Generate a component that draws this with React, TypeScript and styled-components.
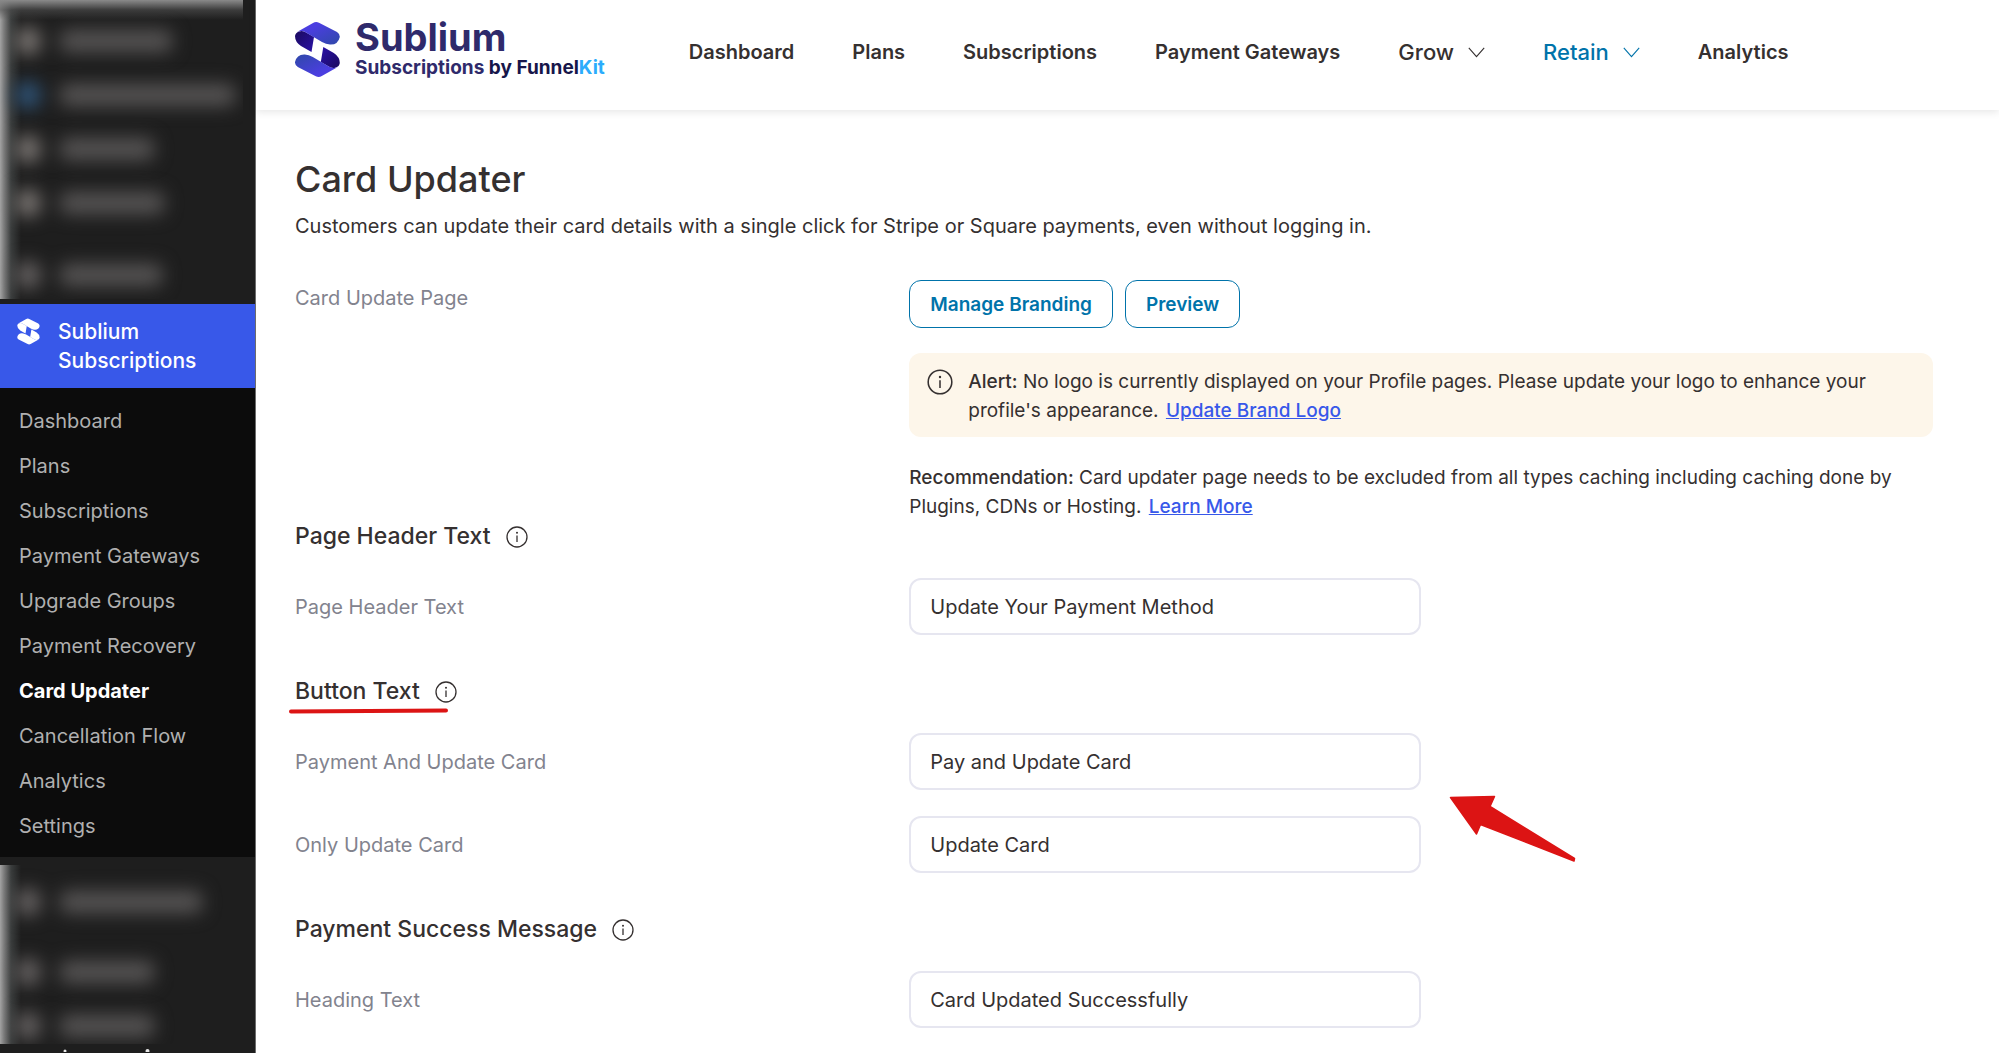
import React, { useId } from "react";
import styled, { createGlobalStyle } from "styled-components";

const GlobalStyle = createGlobalStyle`
  *, *::before, *::after { box-sizing: border-box; }
  body {
    margin: 0;
    background: #fff;
    color: #353030;
    font-family: Inter, "Liberation Sans", sans-serif;
    font-size: 20px;
    line-height: 29px;
  }
`;

const Shell = styled.div`
  display: flex;
  min-height: 100vh;
`;

/* ---------- admin sidebar ---------- */

const Sidebar = styled.aside`
  flex: none;
  width: 256px;
  background: #1e1e1e;
  border-right: 1px solid #6c6c6c;
`;

const HiddenGroup = styled.div<{ $topFade?: boolean }>`
  width: 243px;
  overflow: hidden;
  padding: ${(p) => (p.$topFade ? "14px 0 0 16px" : "10px 0 0 16px")};
  height: ${(p) => (p.$topFade ? "299px" : "179px")};
  background: ${(p) =>
    p.$topFade
      ? "linear-gradient(to bottom, #8a8a8a, rgba(80, 80, 80, 0.6) 10px, rgba(30, 30, 30, 0) 20px),"
      : ""}
    linear-gradient(to right, #a4a4a4, #7c7c7c 4px, rgba(70, 74, 74, 0.7) 11px, rgba(30, 30, 30, 0) 21px);
`;

const HiddenRow = styled.div<{ $gap?: number }>`
  display: flex;
  align-items: center;
  gap: 20px;
  height: 54px;
  margin-top: ${(p) => p.$gap ?? 0}px;
  filter: blur(9px);
`;

const HiddenIcon = styled.span<{ $color?: string }>`
  width: 24px;
  height: 26px;
  border-radius: 8px;
  background: ${(p) => p.$color ?? "#7c7774"};
`;

const HiddenLabel = styled.span<{ $width: number }>`
  width: ${(p) => p.$width}px;
  height: 22px;
  border-radius: 6px;
  background: #565454;
`;

const ClippedRow = styled.svg`
  display: block;
  margin-top: 5px;
`;

const ActivePlugin = styled.a`
  display: flex;
  gap: 18px;
  margin-top: 5px;
  padding: 13px 17px;
  background: #3858e9;
  color: #fff;
  font-size: 21px;
  font-weight: 500;
  text-decoration: none;

  svg { flex: none; }
`;

const SubMenu = styled.ul`
  list-style: none;
  margin: 0 0 8px;
  padding: 11px 0 8px;
  background: #0c0c0c;
`;

const SubLink = styled.a<{ $active?: boolean }>`
  display: block;
  padding: 8px 19px;
  color: ${(p) => (p.$active ? "#fff" : "#b0b0b0")};
  font-weight: ${(p) => (p.$active ? 700 : 400)};
  text-decoration: none;
`;

/* ---------- top bar ---------- */

const Page = styled.div`
  flex: 1;
  min-width: 0;
`;

const TopBar = styled.header`
  display: flex;
  align-items: center;
  height: 110px;
  padding: 0 39px 12px;
  box-shadow: 0 2px 8px rgba(0, 0, 0, 0.1);
`;

const Brand = styled.a`
  display: flex;
  align-items: center;
  gap: 15px;
  margin-right: 84px;
  color: #2f2a6b;
  text-decoration: none;
`;

const BrandText = styled.span`
  display: grid;
`;

const BrandName = styled.span`
  font-size: 38px;
  line-height: 38px;
  font-weight: 700;
`;

const BrandLine = styled.span`
  font-size: 19px;
  line-height: 24px;
  font-weight: 700;
  white-space: nowrap;

  b { color: #17164a; font-weight: 700; }
  i { color: #2bacfc; font-style: normal; }
`;

const Nav = styled.nav`
  display: flex;
  gap: 58px;
  padding-top: 7px;
`;

const NavLink = styled.a<{ $active?: boolean; $menu?: boolean }>`
  display: flex;
  align-items: center;
  gap: 14px;
  color: ${(p) => (p.$active ? "#0073aa" : "#353030")};
  font-size: ${(p) => (p.$menu ? 22 : 20)}px;
  font-weight: ${(p) => (p.$menu ? 500 : 600)};
  white-space: nowrap;
  text-decoration: none;
`;

/* ---------- content ---------- */

const Content = styled.main`
  padding: 47px 66px 25px 39px;
`;

const Title = styled.h1`
  margin: 0 0 11px;
  font-size: 36px;
  line-height: 44px;
  font-weight: 500;
`;

const Intro = styled.p`
  margin: 0;
`;

const Row = styled.div<{ $top?: boolean }>`
  display: grid;
  grid-template-columns: 3fr 5fr;
  align-items: ${(p) => (p.$top ? "start" : "center")};
`;

const RowLabel = styled.span`
  padding-top: 4px;
  color: #82838e;
`;

const FieldLabel = styled.label`
  padding-top: 2px;
  color: #82838e;
`;

const BrandingBlock = styled.section`
  margin-top: 39px;
`;

const Actions = styled.div`
  display: flex;
  gap: 12px;
`;

const OutlineButton = styled.button`
  height: 48px;
  padding: 0 20px;
  border: 1px solid #0073aa;
  border-radius: 12px;
  background: #fff;
  color: #0073aa;
  font: inherit;
  font-weight: 600;
  font-size: 19px;
`;

const Alert = styled.div`
  display: flex;
  gap: 15px;
  margin: 25px 0 26px;
  padding: 14px 18px 12px;
  border-radius: 12px;
  background: #fdf6ea;
  font-size: 19px;

  svg { flex: none; margin-top: 2px; }
`;

const Note = styled.p`
  margin: 0;
  font-size: 19px;
`;

const Strong = styled.strong`
  font-weight: 500;
`;

const InlineLink = styled.a`
  color: #3858e9;
  font-weight: 500;
  margin-left: 2px;
`;

const Section = styled.section`
  & + & { margin-top: 41px; }
`;

const SectionTitle = styled.h2`
  position: relative;
  display: flex;
  align-items: center;
  gap: 15px;
  width: fit-content;
  margin: 0 0 26px;
  font-size: 23px;
  line-height: 31px;
  font-weight: 500;
`;

const Fields = styled.div`
  display: grid;
  gap: 26px;
`;

const InputWrap = styled.div`
  position: relative;
  width: 50%;
`;

const TextInput = styled.input`
  display: block;
  width: 100%;
  height: 57px;
  padding: 0 19px;
  border: 2px solid #e6e6f0;
  border-radius: 12px;
  background: #fff;
  color: #353030;
  font: inherit;
`;

const Underline = styled.svg`
  position: absolute;
  left: -6px;
  top: 32px;
`;

const Arrow = styled.svg`
  position: absolute;
  left: calc(100% + 28px);
  top: 62px;
`;

/* ---------- drawings ---------- */

const RIBBON = "M2 10 L18 1 Q21 -.8 24 .8 L42 10 Q45 12 44.8 15 Q43 23 35 22.6 Q31 22.3 27 20 L11 10.5 Q7 8 2 10Z";
const FOLD = "M4 9.5 Q8 8 12 11 L19 15 L16.5 30 L6 24 Q0 20 0 14 Q0.5 10.5 4 9.5Z";

function LogoMark() {
  return (
    <svg width="45" height="55" viewBox="0 0 45 55" aria-hidden="true">
      <defs>
        <linearGradient id="ribbon" x1="0" y1="0" x2="1" y2="1">
          <stop offset="0.3" stopColor="#4b3ee0" />
          <stop offset="1" stopColor="#2f49a8" />
        </linearGradient>
        <linearGradient id="fold" x1="0" y1="0" x2="1" y2="1">
          <stop offset="0" stopColor="#1b0a5e" />
          <stop offset="1" stopColor="#2a11a8" />
        </linearGradient>
      </defs>
      {["", "rotate(180 22.4 27.5)"].map((t) => (
        <g key={t} transform={t}>
          <path d={FOLD} fill="url(#fold)" />
          <path d={RIBBON} fill="url(#ribbon)" />
        </g>
      ))}
    </svg>
  );
}

function MenuMark() {
  return (
    <svg width="23" height="29" viewBox="0 -3 45 58" aria-hidden="true">
      {["", "rotate(180 22.4 26)"].map((t) => (
        <g key={t} transform={t} fill="#fff">
          <path d={FOLD} />
          <path d={RIBBON} />
        </g>
      ))}
    </svg>
  );
}

function InfoIcon({ size }: { size: number }) {
  return (
    <svg width={size} height={size} viewBox="0 0 22 22" fill="none" stroke="#353030" aria-hidden="true">
      <circle cx="11" cy="11" r="10" strokeWidth="1.3" />
      <path d="M11 9.6V16" strokeWidth="1.3" />
      <circle cx="11" cy="6.8" r="1" fill="#353030" stroke="none" />
    </svg>
  );
}

function Chevron() {
  return (
    <svg width="17" height="11" viewBox="0 0 17 11" fill="none" stroke="currentColor" strokeWidth="1.1" aria-hidden="true">
      <path d="M.8 .8L8.5 9.6L16.2 .8" />
    </svg>
  );
}

function RedUnderline() {
  return (
    <Underline width="160" height="6" viewBox="0 0 160 6" aria-hidden="true">
      <path d="M2 3.6L157 2.4" stroke="#dc1414" strokeWidth="4" strokeLinecap="round" />
    </Underline>
  );
}

function RedArrow() {
  return (
    <Arrow width="128" height="68" viewBox="0 0 128 68" aria-hidden="true">
      <path
        d="M1.5 2.5L45.5 1.5L41 11.5L125.5 63.5L125 66L31.5 29.5L27.5 39Z"
        fill="#dc1414"
        stroke="#dc1414"
        strokeWidth="1.5"
        strokeLinejoin="round"
      />
    </Arrow>
  );
}

/* ---------- composition ---------- */

function Field({ label, value, children }: { label: string; value: string; children?: React.ReactNode }) {
  const id = useId();
  return (
    <Row>
      <FieldLabel htmlFor={id}>{label}</FieldLabel>
      <InputWrap>
        <TextInput id={id} type="text" defaultValue={value} />
        {children}
      </InputWrap>
    </Row>
  );
}

const SUBMENU = [
  "Dashboard", "Plans", "Subscriptions", "Payment Gateways", "Upgrade Groups",
  "Payment Recovery", "Card Updater", "Cancellation Flow", "Analytics", "Settings",
];

const NAV = [
  { label: "Dashboard" },
  { label: "Plans" },
  { label: "Subscriptions" },
  { label: "Payment Gateways" },
  { label: "Grow", menu: true },
  { label: "Retain", menu: true, active: true },
  { label: "Analytics" },
];

export default function App() {
  return (
    <>
      <GlobalStyle />
      <Shell>
        <Sidebar>
          <HiddenGroup $topFade aria-hidden="true">
            <HiddenRow><HiddenIcon /><HiddenLabel $width={112} /></HiddenRow>
            <HiddenRow><HiddenIcon $color="#2f5478" /><HiddenLabel $width={175} /></HiddenRow>
            <HiddenRow><HiddenIcon /><HiddenLabel $width={94} /></HiddenRow>
            <HiddenRow><HiddenIcon /><HiddenLabel $width={104} /></HiddenRow>
            <HiddenRow $gap={18}><HiddenIcon $color="#666262" /><HiddenLabel $width={102} /></HiddenRow>
          </HiddenGroup>
          <ActivePlugin href="#sublium">
            <MenuMark />
            <span>Sublium Subscriptions</span>
          </ActivePlugin>
          <SubMenu>
            {SUBMENU.map((item) => (
              <li key={item}>
                <SubLink href="#" $active={item === "Card Updater"}>{item}</SubLink>
              </li>
            ))}
          </SubMenu>
          <HiddenGroup aria-hidden="true">
            <HiddenRow><HiddenIcon $color="#666262" /><HiddenLabel $width={142} /></HiddenRow>
            <HiddenRow $gap={16}><HiddenIcon $color="#666262" /><HiddenLabel $width={94} /></HiddenRow>
            <HiddenRow><HiddenIcon $color="#666262" /><HiddenLabel $width={94} /></HiddenRow>
          </HiddenGroup>
          <ClippedRow width="243" height="3" viewBox="0 0 243 3" fill="#e8e8e8" aria-hidden="true">
            <circle cx="65" cy="2" r="1.5" />
            <circle cx="147.5" cy="2" r="2" />
          </ClippedRow>
        </Sidebar>

        <Page>
          <TopBar>
            <Brand href="#home">
              <LogoMark />
              <BrandText>
                <BrandName>Sublium</BrandName>
                <BrandLine>Subscriptions <b>by Funnel</b><i>Kit</i></BrandLine>
              </BrandText>
            </Brand>
            <Nav>
              {NAV.map(({ label, menu, active }) => (
                <NavLink key={label} href="#" $active={active} $menu={menu}>
                  {label}
                  {menu && <Chevron />}
                </NavLink>
              ))}
            </Nav>
          </TopBar>

          <Content>
            <Title>Card Updater</Title>
            <Intro>
              Customers can update their card details with a single click for Stripe or Square payments, even without
              logging in.
            </Intro>

            <BrandingBlock>
              <Row $top>
                <RowLabel>Card Update Page</RowLabel>
                <div>
                  <Actions>
                    <OutlineButton type="button">Manage Branding</OutlineButton>
                    <OutlineButton type="button">Preview</OutlineButton>
                  </Actions>
                  <Alert role="note">
                    <InfoIcon size={26} />
                    <span>
                      <Strong>Alert:</Strong> No logo is currently displayed on your Profile pages. Please update your
                      logo to enhance your profile's appearance. <InlineLink href="#">Update Brand Logo</InlineLink>
                    </span>
                  </Alert>
                  <Note>
                    <Strong>Recommendation:</Strong> Card updater page needs to be excluded from all types caching
                    including caching done by Plugins, CDNs or Hosting. <InlineLink href="#">Learn More</InlineLink>
                  </Note>
                </div>
              </Row>
            </BrandingBlock>

            <Section>
              <SectionTitle>Page Header Text <InfoIcon size={22} /></SectionTitle>
              <Fields>
                <Field label="Page Header Text" value="Update Your Payment Method" />
              </Fields>
            </Section>

            <Section>
              <SectionTitle>
                Button Text <InfoIcon size={22} />
                <RedUnderline />
              </SectionTitle>
              <Fields>
                <Field label="Payment And Update Card" value="Pay and Update Card">
                  <RedArrow />
                </Field>
                <Field label="Only Update Card" value="Update Card" />
              </Fields>
            </Section>

            <Section>
              <SectionTitle>Payment Success Message <InfoIcon size={22} /></SectionTitle>
              <Fields>
                <Field label="Heading Text" value="Card Updated Successfully" />
              </Fields>
            </Section>
          </Content>
        </Page>
      </Shell>
    </>
  );
}
